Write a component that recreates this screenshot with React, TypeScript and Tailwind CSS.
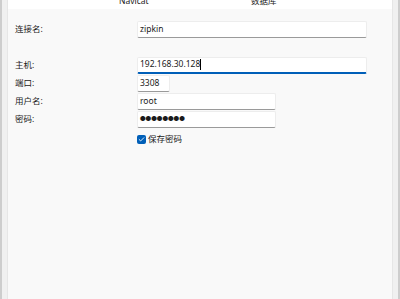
import { Check } from 'lucide-react'

function Field({ value, width, focused, dots }: { value: string; width: string; focused?: boolean; dots?: boolean }) {
  return (
    <div
      className={`${width} h-[17px] bg-white rounded-[2px] border border-[#ededed] flex items-center px-[2px] text-[#1a1a1a] ${
        dots ? 'text-[5.6px]' : 'text-[8.5px]'
      } ${focused ? 'border-b-2 border-b-[#005fb8]' : 'border-b-[#9a9a9a]'}`}
    >
      {value}
      {focused && <span className="w-px h-[11px] bg-black" />}
    </div>
  )
}

function Row({ label, children }: { label: string; children: React.ReactNode }) {
  return (
    <div className="flex items-center h-[18px]">
      <div className="w-[129px] pl-[7px] text-[8.5px] text-[#1a1a1a]">{label}</div>
      {children}
    </div>
  )
}

export default function App() {
  return (
    <div
      className="w-[400px] h-[299px] flex bg-[#f0f0f0] overflow-hidden"
      style={{ fontFamily: '"Noto Sans", "Noto Sans CJK SC", sans-serif' }}
    >
      <div className="w-[2px] bg-[#cdcdcd]" />
      <div className="w-[5px] bg-[#f0f0f0]" />
      <div className="flex-1 flex flex-col bg-[#f9f9f9] border-x border-[#e6e6e6]">
        <div className="h-[9px] bg-white relative overflow-hidden text-[8.5px] text-[#1a1a1a]">
          <span className="absolute left-[111px] -top-[5px]">Navicat</span>
          <span className="absolute left-[243px] -top-[5px]">数据库</span>
        </div>

        <div className="flex flex-col pt-[11px]">
          <Row label="连接名:">
            <Field value="zipkin" width="w-[230px]" />
          </Row>
          <div className="h-[18px]" />
          <Row label="主机:">
            <Field value="192.168.30.128" width="w-[230px]" focused />
          </Row>
          <Row label="端口:">
            <Field value="3308" width="w-[33px]" />
          </Row>
          <Row label="用户名:">
            <Field value="root" width="w-[139px]" />
          </Row>
          <Row label="密码:">
            <Field value="●●●●●●●●" width="w-[139px]" dots />
          </Row>
          <div className="flex items-center mt-[5px] pl-[129px] gap-[2px]">
            <div className="w-[9px] h-[9px] rounded-[2px] bg-[#005fb8] flex items-center justify-center">
              <Check className="w-[7px] h-[7px] text-white" strokeWidth={3} />
            </div>
            <span className="text-[8.5px] text-[#1a1a1a]">保存密码</span>
          </div>
        </div>
      </div>
      <div className="w-[5px] bg-[#f0f0f0]" />
      <div className="w-[2px] bg-[#cdcdcd]" />
    </div>
  )
}
